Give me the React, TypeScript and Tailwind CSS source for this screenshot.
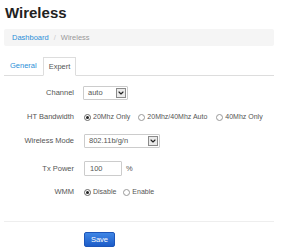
import { ChevronDown } from 'lucide-react';

const Label = ({ children }: { children: React.ReactNode }) => (
  <div className="w-[70px] shrink-0 text-right text-[7.5px] text-[#555]">{children}</div>
);

const Radio = ({ checked, label, className = '' }: { checked?: boolean; label: string; className?: string }) => (
  <div className={`flex items-center gap-[2px] ${className}`}>
    <span className={`w-[7px] h-[7px] rounded-full border flex items-center justify-center bg-white ${checked ? 'border-[#666]' : 'border-[#999]'}`}>
      {checked && <span className="w-[3px] h-[3px] rounded-full bg-[#222]" />}
    </span>
    <span className="text-[7px] text-[#555]">{label}</span>
  </div>
);

const Select = ({ value, width }: { value: string; width: string }) => (
  <div className={`${width} h-[14px] border border-[#ccc] rounded-[1px] bg-white flex items-center justify-between pl-[4px] pr-[1px]`}>
    <span className="text-[7.5px] text-[#555]">{value}</span>
    <span className="w-[10px] h-[10px] border border-[#8a8a8a] bg-[#eaeaea] flex items-center justify-center">
      <ChevronDown className="w-[8px] h-[8px] text-[#222]" strokeWidth={3.5} />
    </span>
  </div>
);

export default function App() {
  return (
    <div className="w-[281px] h-[250px] bg-white px-[4px] pt-[4px] font-['Liberation_Sans',Arial,sans-serif] overflow-hidden">
      <h1 className="text-[15px] leading-[18px] font-bold text-[#222] pl-[1px]">Wireless</h1>

      <div className="mt-[7px] h-[17px] w-[270px] bg-[#f5f5f5] rounded-[2px] flex items-center pl-[8px] text-[7.5px]">
        <span className="text-[#2a8fd8]">Dashboard</span>
        <span className="text-[#ccc] px-[5px]">/</span>
        <span className="text-[#999]">Wireless</span>
      </div>

      {/* tabs */}
      <div className="mt-[11px] w-[270px] h-[19px] flex items-end border-b border-[#ddd] text-[7.5px]">
        <div className="h-[18px] pl-[6px] pr-[4px] mr-[2px] flex items-center text-[#2a8fd8]">General</div>
        <div className="h-[19px] px-[5px] -mb-px flex items-center bg-white border border-[#ddd] border-b-white text-[#555]">Expert</div>
      </div>

      {/* form */}
      <div className="mt-[10px] flex items-center gap-[9px] h-[14px]">
        <Label>Channel</Label>
        <Select value="auto" width="w-[45px]" />
      </div>

      <div className="mt-[10px] flex items-center gap-[9px] h-[14px]">
        <Label>HT Bandwidth</Label>
        <Radio checked label="20Mhz Only" className="ml-[1px] mr-[-1px]" />
        <Radio label="20Mhz/40Mhz Auto" />
        <Radio label="40Mhz Only" />
      </div>

      <div className="mt-[10px] flex items-center gap-[10px] h-[14px]">
        <Label>Wireless Mode</Label>
        <Select value="802.11b/g/n" width="w-[76px]" />
      </div>

      <div className="mt-[13px] flex items-center gap-[10px] h-[15px]">
        <Label>Tx Power</Label>
        <div className="flex items-center gap-[4px]">
          <div className="w-[38px] h-[15px] border border-[#ccc] rounded-[1px] flex items-center pl-[5px] text-[7.5px] text-[#555]">100</div>
          <span className="text-[7.5px] text-[#555]">%</span>
        </div>
      </div>

      <div className="mt-[9px] flex items-center gap-[7px] h-[14px]">
        <Label>WMM</Label>
        <Radio checked label="Disable" className="ml-[3px]" />
        <Radio label="Enable" />
      </div>

      <div className="mt-[22px] w-[270px] h-px bg-[#eee]" />

      <div className="mt-[10px] pl-[80px]">
        <button className="w-[31px] h-[15px] rounded-[2px] border border-[#1d55b8] bg-gradient-to-b from-[#3f86e6] to-[#1c5cc8] text-white text-[7.5px] flex items-center justify-center">
          Save
        </button>
      </div>
    </div>
  );
}
